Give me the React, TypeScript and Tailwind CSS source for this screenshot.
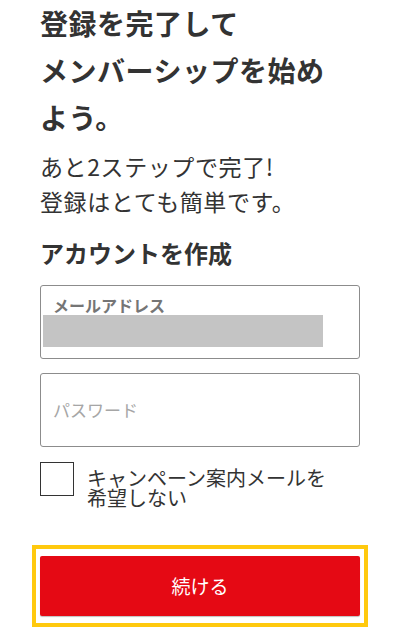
export default function App() {
  return (
    <div
      className="min-h-[638px] bg-white px-10 text-[#333]"
      style={{ fontFamily: '"Noto Sans CJK JP", "Noto Sans", sans-serif' }}
    >
      {/* Title */}
      <h1 className="text-[28px] font-bold leading-[47px] tracking-[0.5px]">
        登録を完了して
        <br />
        メンバーシップを始め
        <br />
        よう。
      </h1>
      <p className="mt-2 text-[23px] leading-[35px] tracking-[0.6px]">
        あと2ステップで完了!
        <br />
        登録はとても簡単です。
      </p>
      <h2 className="mt-4 text-[24px] font-bold leading-[35px]">アカウントを作成</h2>

      {/* Email */}
      <div className="mt-[15px] h-[74px] rounded-[3px] border border-[#8c8c8c] pt-[9px]">
        <div className="pl-3 text-[16px] font-semibold leading-[20px] text-[#757575]">メールアドレス</div>
        <div className="ml-[2px] h-[32px] w-[280px] bg-[#c4c4c4]" />
      </div>

      {/* Password */}
      <div className="mt-[14px] flex h-[74px] items-center rounded-[3px] border border-[#8c8c8c] pl-3">
        <span className="text-[17px] text-[#a6a6a6]">パスワード</span>
      </div>

      {/* Checkbox */}
      <div className="mt-[15px] flex items-start gap-[13px]">
        <div className="h-[34px] w-[34px] shrink-0 border border-[#333]" />
        <div className="pt-[6px] text-[20px] leading-[20px]">
          キャンペーン案内メールを
          <br />
          希望しない
        </div>
      </div>

      {/* Button with highlight */}
      <div className="-mx-2 mt-[37px] border-4 border-[#ffc90e] px-1 py-[7px]">
        <button className="flex h-[60px] w-full items-center justify-center rounded-[2px] bg-[#e50914] text-[19px] text-white shadow-[0_1px_1px_rgba(0,0,0,0.25)]">
          続ける
        </button>
      </div>
    </div>
  );
}
